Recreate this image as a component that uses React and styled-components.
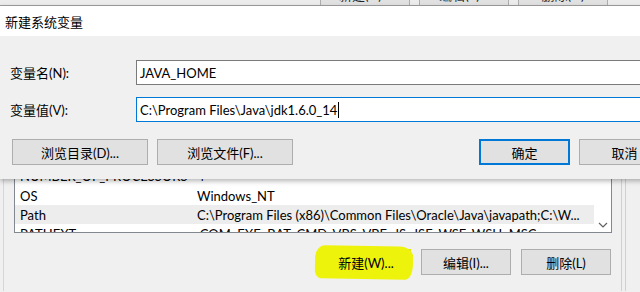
import React from 'react';
import styled, { createGlobalStyle } from 'styled-components';

const GlobalStyle = createGlobalStyle`
  html, body {
    margin: 0;
    padding: 0;
    background: #f0f0f0;
  }
  * {
    box-sizing: border-box;
  }
`;

const Screen = styled.div`
  width: 640px;
  height: 292px;
  overflow: hidden;
  position: relative;
  background: #f0f0f0;
  font-family: Lato, "Noto Sans CJK SC", sans-serif;
  font-size: 13px;
  color: #000;
`;

const TopStrip = styled.div`
  height: 6px;
  overflow: hidden;
  display: flex;
  align-items: flex-end;
  gap: 9px;
  padding-left: 320px;
  background: #ececec;
  border-bottom: 1px solid #a0a0a0;
`;

const StripButton = styled.div`
  flex: none;
  width: 90px;
  height: 24px;
  margin-bottom: -1px;
  background: #e1e1e1;
  border: 1px solid #adadad;
  display: flex;
  align-items: center;
  justify-content: center;
  color: #222;
`;

const Dialog = styled.div`
  position: relative;
  z-index: 2;
  width: 680px;
  display: flex;
  flex-direction: column;
  box-shadow: 0 2px 5px rgba(0, 0, 0, 0.3);
`;

const TitleBar = styled.div`
  height: 30px;
  background: #fff;
  display: flex;
  align-items: center;
  padding-left: 5px;
  font-size: 13px;
`;

const Body = styled.div`
  background: #f0f0f0;
  padding: 24px 10px 14px 10px;
  display: flex;
  flex-direction: column;
`;

const FieldRow = styled.div`
  display: flex;
  align-items: center;
  margin-bottom: ${p => p.$gap || 0}px;
`;

const Label = styled.div`
  width: 126px;
  flex: none;
  font-size: 13px;
`;

const Input = styled.div`
  flex: 1;
  height: 25px;
  background: #fff;
  border: 1px solid ${p => (p.$focus ? '#0078d7' : '#7a7a7a')};
  display: flex;
  align-items: center;
  padding-left: 3px;
  font-size: 13px;
  white-space: nowrap;
`;

const Caret = styled.span`
  display: inline-block;
  width: 1px;
  height: 16px;
  background: #000;
  margin-left: 1px;
  vertical-align: middle;
`;

const ButtonRow = styled.div`
  display: flex;
  align-items: center;
  margin-top: 17px;
  padding-left: 2px;
`;

const Button = styled.div`
  flex: none;
  width: ${p => p.$w || 90}px;
  height: 26px;
  margin-right: ${p => p.$mr || 0}px;
  background: #e1e1e1;
  border: ${p => (p.$primary ? '2px solid #0078d7' : '1px solid #adadad')};
  display: flex;
  align-items: center;
  justify-content: center;
  font-size: 13px;
  color: #000;
`;

const Spacer = styled.div`
  flex: 1;
`;

const Back = styled.div`
  display: flex;
  height: 112px;
`;

const BackPanel = styled.div`
  width: 619px;
  flex: none;
  margin-left: 3px;
  border-left: 1px solid #d6d6d6;
  border-right: 1px solid #d0d0d0;
  padding: 0 9px 0 10px;
  display: flex;
  flex-direction: column;
`;

const FrameEdge = styled.div`
  width: 4px;
  flex: none;
  border-right: 1px solid #d0d0d0;
`;

const ListBox = styled.div`
  height: 54px;
  display: flex;
  background: #fff;
  border: 1px solid #828790;
  border-top: none;
  overflow: hidden;
`;

const Rows = styled.div`
  flex: 1;
  margin-top: -16px;
`;

const Row = styled.div`
  height: ${p => (p.$cut ? 23 : 19)}px;
  padding-bottom: ${p => (p.$cut ? 2 : 0)}px;
  display: flex;
  align-items: ${p => (p.$cut ? 'flex-end' : 'center')};
  background: ${p => (p.$hover ? '#ededed' : '#fff')};
  font-size: 13px;
  line-height: 16px;
  white-space: nowrap;
  overflow: hidden;
`;

const NameCell = styled.div`
  width: 182px;
  flex: none;
  padding-left: 5px;
`;

const ValueCell = styled.div`
  flex: 1;
  overflow: hidden;
`;

const ScrollTrack = styled.div`
  width: 17px;
  flex: none;
  display: flex;
  align-items: flex-end;
  justify-content: center;
  padding-bottom: 4px;
  color: #606060;
`;

const BackButtons = styled.div`
  display: flex;
  justify-content: flex-end;
  gap: 10px;
  margin-top: 16px;
  padding-right: 1px;
`;

const Marked = styled(Button)`
  position: relative;
  background: #eef30c;
  border-color: #e4e80a;

  &::before {
    content: '';
    position: absolute;
    left: -7px;
    right: -3px;
    top: -4px;
    bottom: -5px;
    background: #eef30c;
    border-radius: 10px 14px 8px 6px / 12px 10px 14px 8px;
    transform: rotate(1deg);
    z-index: 0;
  }

  span {
    position: relative;
    z-index: 1;
  }
`;

const Chevron = () => (
  <svg width="10" height="6" viewBox="0 0 10 6">
    <path d="M1 1 L5 5 L9 1" fill="none" stroke="#606060" strokeWidth="1.2" />
  </svg>
);

const App = () => {
  return (
    <>
      <GlobalStyle />
      <Screen>
        <TopStrip>
          <StripButton>新建(N)...</StripButton>
          <StripButton>编辑(E)...</StripButton>
          <StripButton>删除(D)</StripButton>
        </TopStrip>

        <Dialog>
          <TitleBar>新建系统变量</TitleBar>
          <Body>
            <FieldRow $gap={12}>
              <Label>变量名(N):</Label>
              <Input>JAVA_HOME</Input>
            </FieldRow>
            <FieldRow>
              <Label>变量值(V):</Label>
              <Input $focus>
                C:\Program Files\Java\jdk1.6.0_14<Caret />
              </Input>
            </FieldRow>
            <ButtonRow>
              <Button $w={136} $mr={9}>浏览目录(D)...</Button>
              <Button $w={136}>浏览文件(F)...</Button>
              <Spacer />
              <Button $w={91} $mr={9} $primary>确定</Button>
              <Button $w={91}>取消</Button>
            </ButtonRow>
          </Body>
        </Dialog>

        <Back>
          <BackPanel>
            <ListBox>
              <Rows>
                <Row $cut>
                  <NameCell>NUMBER_OF_PROCESSORS</NameCell>
                  <ValueCell>4</ValueCell>
                </Row>
                <Row>
                  <NameCell>OS</NameCell>
                  <ValueCell>Windows_NT</ValueCell>
                </Row>
                <Row $hover>
                  <NameCell>Path</NameCell>
                  <ValueCell>C:\Program Files (x86)\Common Files\Oracle\Java\javapath;C:\W...</ValueCell>
                </Row>
                <Row>
                  <NameCell>PATHEXT</NameCell>
                  <ValueCell>.COM;.EXE;.BAT;.CMD;.VBS;.VBE;.JS;.JSE;.WSF;.WSH;.MSC</ValueCell>
                </Row>
              </Rows>
              <ScrollTrack>
                <Chevron />
              </ScrollTrack>
            </ListBox>
            <BackButtons>
              <Marked><span>新建(W)...</span></Marked>
              <Button>编辑(I)...</Button>
              <Button>删除(L)</Button>
            </BackButtons>
          </BackPanel>
          <FrameEdge />
        </Back>
      </Screen>
    </>
  );
};

export default App;
